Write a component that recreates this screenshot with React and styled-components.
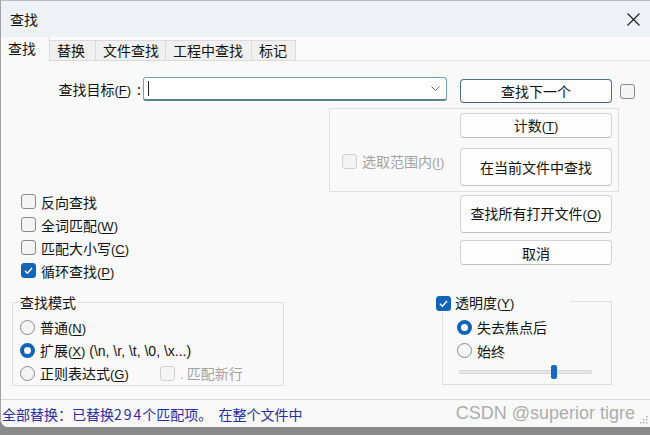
import React from "react";
import styled, { createGlobalStyle } from "styled-components";

const GlobalStyle = createGlobalStyle`
  html, body { margin: 0; padding: 0; }
  body {
    width: 650px;
    height: 435px;
    overflow: hidden;
    background: #8a8a8a;
    font-family: "Noto Sans CJK SC", "Noto Sans", sans-serif;
    font-size: 14px;
    color: #111111;
  }
`;

const Window = styled.div`
  width: 650px;
  height: 427px;
  box-sizing: border-box;
  display: flex;
  flex-direction: column;
  background: #f9f9f9;
  border-top: 1px solid #bcbcbc;
  border-left: 1px solid #a3a3a3;
  border-bottom-left-radius: 8px;
  overflow: hidden;
`;

const TitleBar = styled.div`
  height: 36px;
  flex: none;
  display: flex;
  align-items: center;
  justify-content: space-between;
  padding: 0 10px 0 9px;
  background: #eef2f6;
  line-height: 20px;
`;

const TabStrip = styled.div`
  height: 24px;
  flex: none;
  display: flex;
  align-items: flex-end;
  background: #fbfbfb;
  box-shadow: inset 0 -1px 0 #e2e2e2;
`;

const Tab = styled.div`
  box-sizing: border-box;
  width: ${(p) => p.$w}px;
  height: ${(p) => (p.$active ? 24 : 21)}px;
  padding-left: 7px;
  line-height: ${(p) => (p.$active ? 23 : 19)}px;
  background: ${(p) => (p.$active ? "#f9f9f9" : "#f0f0f0")};
  border-right: 1px solid #dadada;
  border-top: ${(p) => (p.$active ? "none" : "1px solid #dadada")};
  border-bottom: ${(p) => (p.$active ? "none" : "1px solid #dadada")};
`;

const Content = styled.div`
  flex: 1;
  display: flex;
  flex-direction: column;
`;

const TopRow = styled.div`
  margin-top: 16px;
  display: flex;
  align-items: flex-start;
`;

const FieldLabel = styled.div`
  width: 142px;
  box-sizing: border-box;
  padding-right: 2px;
  text-align: right;
  line-height: 24px;
`;

const Colon = styled.span`
  margin-left: 6px;
`;

const Acc = styled.span`
  font-family: "Liberation Sans", Arial, sans-serif;
  font-size: 13px;
  u { text-underline-offset: 2px; }
`;

const Plain = styled.span`
  font-family: "Liberation Sans", Arial, sans-serif;
  font-size: 14px;
`;

const Combo = styled.div`
  width: 304px;
  height: 24px;
  box-sizing: border-box;
  display: flex;
  align-items: center;
  justify-content: space-between;
  padding: 0 6px 0 4px;
  background: #ffffff;
  border: 1px solid #77a2b3;
  border-bottom: 2px solid #5c7f92;
  border-radius: 3px;
`;

const Caret = styled.span`
  width: 1px;
  height: 15px;
  background: #222;
`;

const Button = styled.button`
  width: 152px;
  height: ${(p) => p.$h || 25}px;
  margin-top: ${(p) => p.$mt || 0}px;
  margin-left: ${(p) => p.$ml || 0}px;
  flex: none;
  padding: 0;
  font-family: "Noto Sans CJK SC", "Noto Sans", sans-serif;
  font-size: 14px;
  color: #111111;
  background: #fdfdfd;
  border: 1px solid ${(p) => (p.$default ? "#4f7184" : "#d3d3d3")};
  border-bottom-color: ${(p) => (p.$default ? "#3f5f72" : "#bfbfbf")};
  border-radius: 4px;
  line-height: 20px;
`;

const Box = styled.span`
  width: 15px;
  height: 15px;
  box-sizing: border-box;
  flex: none;
  display: flex;
  align-items: center;
  justify-content: center;
  border-radius: 3px;
  border: 1px solid ${(p) => (p.$checked ? "#1062b4" : p.$disabled ? "#cfcfcf" : "#8a8a8a")};
  background: ${(p) => (p.$checked ? "#1664b8" : "#f4f4f4")};
  margin-top: ${(p) => p.$mt || 0}px;
  margin-left: ${(p) => p.$ml || 0}px;
`;

const Dot = styled.span`
  width: 15px;
  height: 15px;
  box-sizing: border-box;
  flex: none;
  border-radius: 50%;
  border: ${(p) => (p.$on ? "4.5px solid #1062b4" : "1px solid #8a8a8a")};
  background: ${(p) => (p.$on ? "#ffffff" : "#f4f4f4")};
`;

const CheckRow = styled.div`
  display: flex;
  align-items: center;
  gap: 5px;
  height: ${(p) => p.$h || 23}px;
  width: ${(p) => (p.$w ? `${p.$w}px` : "auto")};
  flex: none;
  color: ${(p) => (p.$disabled ? "#a3a3a3" : "inherit")};
  white-space: nowrap;
  overflow: hidden;
  margin-top: ${(p) => p.$mt || 0}px;
  margin-left: ${(p) => p.$ml || 0}px;
`;

const SelectionFrame = styled.div`
  margin: 5px 0 0 328px;
  width: 290px;
  height: 84px;
  box-sizing: border-box;
  display: flex;
  align-items: flex-start;
  padding: 4px 6px 0 12px;
  border: 1px solid #e0e0e0;
`;

const ButtonStack = styled.div`
  display: flex;
  flex-direction: column;
  gap: ${(p) => p.$gap}px;
  margin-top: ${(p) => p.$mt || 0}px;
`;

const MiddleRow = styled.div`
  display: flex;
  align-items: flex-start;
`;

const CheckList = styled.div`
  width: 459px;
  box-sizing: border-box;
  padding-left: 20px;
  margin-top: -2px;
  display: flex;
  flex-direction: column;
`;

const BottomRow = styled.div`
  margin-top: 20px;
  display: flex;
  align-items: flex-start;
`;

const GroupBox = styled.div`
  position: relative;
  box-sizing: border-box;
  width: ${(p) => p.$w}px;
  height: 84px;
  margin-left: ${(p) => p.$ml}px;
  margin-top: ${(p) => p.$mt || 0}px;
  border: 1px solid #dedede;
  padding: ${(p) => p.$pad};
  display: flex;
  flex-direction: column;
`;

const Legend = styled.div`
  position: absolute;
  top: ${(p) => p.$top}px;
  left: ${(p) => p.$left}px;
  width: ${(p) => (p.$w ? `${p.$w}px` : "auto")};
  height: 20px;
  padding: 0 2px;
  display: flex;
  align-items: center;
  gap: 4px;
  line-height: 20px;
  background: #f9f9f9;
`;

const RadioRow = styled.div`
  display: flex;
  align-items: center;
  gap: 5px;
  height: 23.5px;
  white-space: nowrap;
`;

const RadioLabel = styled.div`
  display: flex;
  align-items: center;
  gap: 5px;
  width: ${(p) => (p.$w ? `${p.$w}px` : "auto")};
`;

const Track = styled.div`
  position: relative;
  width: 133px;
  height: 4px;
  box-sizing: border-box;
  margin: 7px 0 0 2px;
  background: #e6e6e6;
  border: 1px solid #d8d8d8;
  border-radius: 1px;
`;

const Thumb = styled.span`
  position: absolute;
  top: -6px;
  width: 6px;
  height: 14px;
  border-radius: 2px;
  background: #1868c0;
`;

const StatusBar = styled.div`
  height: 28px;
  flex: none;
  box-sizing: border-box;
  display: flex;
  align-items: center;
  padding-left: 1px;
  border-top: 1px solid #d8d8d8;
  background: #f8f8f8;
`;

const StatusText = styled.span`
  color: #2b2ba6;
  white-space: pre;
`;

const Digits = styled.span`
  letter-spacing: 2px;
  margin-right: -1px;
`;

const Watermark = styled.span`
  margin-left: auto;
  font-family: "Liberation Sans", Arial, sans-serif;
  font-size: 18px;
  color: #acacac;
  text-shadow: 0 0 1px #ffffff;
  white-space: nowrap;
`;

const Grip = styled.svg`
  margin: 12px 2px 0 5px;
  flex: none;
`;

const Check = ({ checked, disabled, mt, ml }) => (
  <Box $checked={checked} $disabled={disabled} $mt={mt} $ml={ml}>
    {checked && (
      <svg width="11" height="11" viewBox="0 0 11 11">
        <polyline points="2,5.8 4.4,8.2 9,3" fill="none" stroke="#fff" strokeWidth="1.3" />
      </svg>
    )}
  </Box>
);

const A = ({ k }) => (
  <Acc>
    (<u>{k}</u>)
  </Acc>
);

export default function App() {
  return (
    <>
      <GlobalStyle />
      <Window>
        <TitleBar>
          <span>查找</span>
          <svg width="13" height="13" viewBox="0 0 13 13">
            <path d="M0.5 0.5 L12.5 12.5 M12.5 0.5 L0.5 12.5" stroke="#1b1b1b" strokeWidth="1.1" />
          </svg>
        </TitleBar>

        <TabStrip>
          <Tab $w={49} $active>查找</Tab>
          <Tab $w={46}>替换</Tab>
          <Tab $w={70}>文件查找</Tab>
          <Tab $w={86}>工程中查找</Tab>
          <Tab $w={44}>标记</Tab>
        </TabStrip>

        <Content>
          <TopRow>
            <FieldLabel>
              查找目标<A k="F" />
              <Colon>:</Colon>
            </FieldLabel>
            <Combo>
              <Caret />
              <svg width="9" height="5" viewBox="0 0 9 5">
                <polyline points="0.5,0.5 4.5,4.5 8.5,0.5" fill="none" stroke="#6a6a6a" strokeWidth="1" />
              </svg>
            </Combo>
            <Button $default $h={24} $mt={2} $ml={13}>
              查找下一个
            </Button>
            <Check mt={7} ml={8} />
          </TopRow>

          <SelectionFrame>
            <CheckRow $disabled $w={118} $h={20} $mt={38}>
              <Check disabled />
              <span>
                选取范围内<A k="I" />
              </span>
            </CheckRow>
            <ButtonStack $gap={10}>
              <Button>
                计数<A k="T" />
              </Button>
              <Button $h={38}>在当前文件中查找</Button>
            </ButtonStack>
          </SelectionFrame>

          <MiddleRow>
            <CheckList>
              <CheckRow>
                <Check />
                <span>反向查找</span>
              </CheckRow>
              <CheckRow>
                <Check />
                <span>
                  全词匹配<A k="W" />
                </span>
              </CheckRow>
              <CheckRow>
                <Check />
                <span>
                  匹配大小写<A k="C" />
                </span>
              </CheckRow>
              <CheckRow>
                <Check checked />
                <span>
                  循环查找<A k="P" />
                </span>
              </CheckRow>
            </CheckList>
            <ButtonStack $gap={7} $mt={3}>
              <Button $h={38}>
                查找所有打开文件<A k="O" />
              </Button>
              <Button>取消</Button>
            </ButtonStack>
          </MiddleRow>

          <BottomRow>
            <GroupBox $w={272} $ml={11} $pad="12.5px 0 0 7px">
              <Legend $top={-11} $left={5}>
                查找模式
              </Legend>
              <RadioRow>
                <Dot />
                <span>
                  普通<A k="N" />
                </span>
              </RadioRow>
              <RadioRow>
                <Dot $on />
                <span>
                  扩展<A k="X" />
                  <Plain> (\n, \r, \t, \0, \x...)</Plain>
                </span>
              </RadioRow>
              <RadioRow>
                <RadioLabel $w={135}>
                  <Dot />
                  <span>
                    正则表达式<A k="G" />
                  </span>
                </RadioLabel>
                <CheckRow $disabled $h={23}>
                  <Check disabled />
                  <span>
                    <Acc>.</Acc> 匹配新行
                  </span>
                </CheckRow>
              </RadioRow>
            </GroupBox>

            <GroupBox $w={170} $ml={158} $mt={-1} $pad="13.5px 0 0 14px">
              <Legend $top={-9} $left={-9} $w={132}>
                <Check checked />
                <span>
                  透明度<A k="Y" />
                </span>
              </Legend>
              <RadioRow>
                <Dot $on />
                <span>失去焦点后</span>
              </RadioRow>
              <RadioRow>
                <Dot />
                <span>始终</span>
              </RadioRow>
              <Track>
                <Thumb style={{ left: 91 }} />
              </Track>
            </GroupBox>
          </BottomRow>
        </Content>

        <StatusBar>
          <StatusText>
            全部替换：已替换<Digits>294</Digits>个匹配项。  在整个文件中
          </StatusText>
          <Watermark>CSDN @superior tigre</Watermark>
          <Grip width="8" height="8" viewBox="0 0 8 8">
            <rect x="6" y="0" width="1.5" height="1.5" fill="#b0b0b0" />
            <rect x="3" y="3" width="1.5" height="1.5" fill="#b0b0b0" />
            <rect x="6" y="3" width="1.5" height="1.5" fill="#b0b0b0" />
            <rect x="0" y="6" width="1.5" height="1.5" fill="#b0b0b0" />
            <rect x="3" y="6" width="1.5" height="1.5" fill="#b0b0b0" />
            <rect x="6" y="6" width="1.5" height="1.5" fill="#b0b0b0" />
          </Grip>
        </StatusBar>
      </Window>
    </>
  );
}
